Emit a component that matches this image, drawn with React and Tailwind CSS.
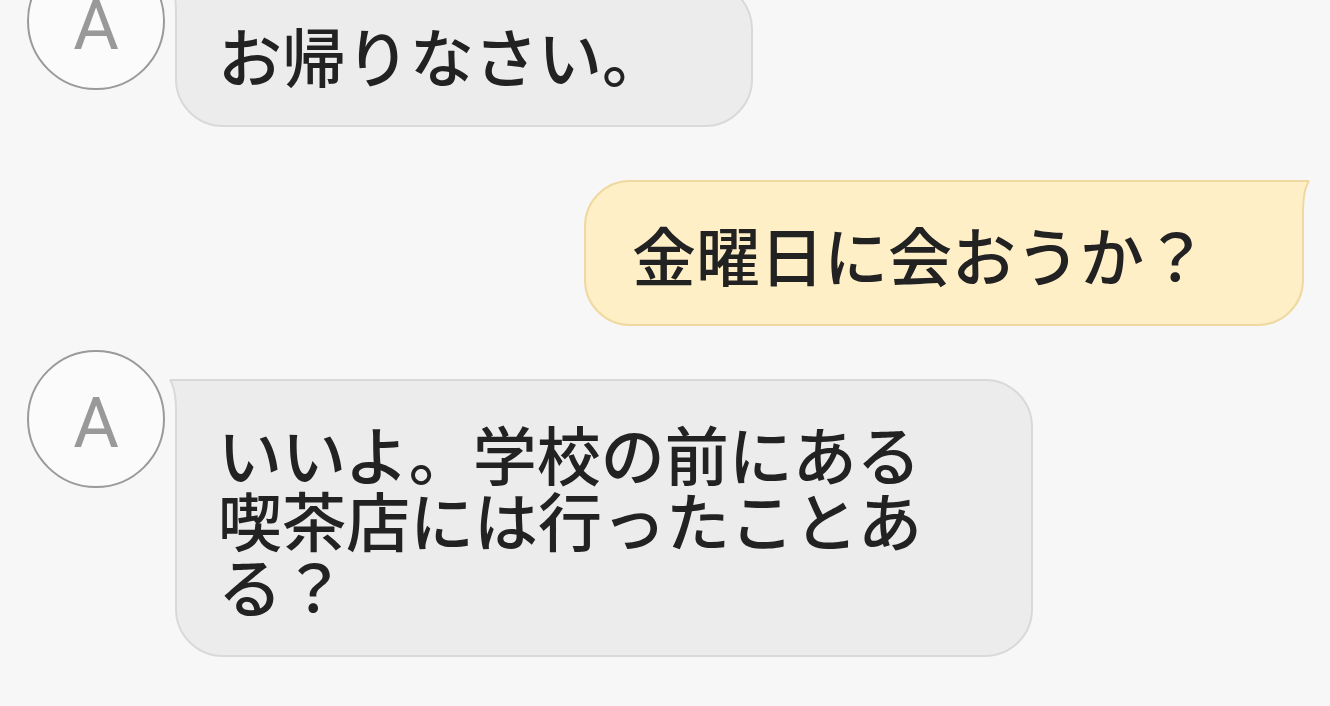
const Avatar = () => (
  <div className="w-[138px] h-[138px] shrink-0 -mt-[29px] rounded-full border-2 border-[#9a9a9a] bg-[#fbfbfb] flex items-center justify-center pt-[8px]">
    <span className="text-[70px] leading-none text-[#999]" style={{ fontFamily: "Roboto, 'Liberation Sans', sans-serif" }}>
      A
    </span>
  </div>
);

const LeftTail = () => (
  <svg className="absolute -left-[8px] -top-[2px]" width="16" height="32" viewBox="0 0 16 32">
    <path d="M1 1 L16 1 L16 32 L7 32 Q7 10 1 1 Z" fill="#ececec" />
    <path d="M1 1 L16 1 M1 1 Q7 10 7 32" fill="none" stroke="#d9d9d9" strokeWidth="2" />
  </svg>
);

const RightTail = () => (
  <svg className="absolute -right-[8px] -top-[2px]" width="16" height="32" viewBox="0 0 16 32">
    <path d="M15 1 L0 1 L0 32 L9 32 Q9 10 15 1 Z" fill="#ffefc7" />
    <path d="M15 1 L0 1 M15 1 Q9 10 9 32" fill="none" stroke="#efd9a0" strokeWidth="2" />
  </svg>
);

const LeftMessage = ({ width, children }) => (
  <div className="flex items-start gap-[10px] pl-[27px]">
    <Avatar />
    <div
      className="relative rounded-[48px] rounded-tl-none border-2 border-[#d9d9d9] bg-[#ececec] pl-[41px] pr-[20px] py-[38px] text-[64px] leading-[66px] font-medium text-[#222]"
      style={{ width }}
    >
      <LeftTail />
      {children}
    </div>
  </div>
);

const RightMessage = ({ width, children }) => (
  <div className="flex justify-end pr-[26px]">
    <div
      className="relative rounded-[46px] rounded-tr-none border-2 border-[#efd9a0] bg-[#ffefc7] pl-[46px] pr-[20px] py-[38px] text-[64px] leading-[66px] font-medium text-[#222]"
      style={{ width }}
    >
      <RightTail />
      {children}
    </div>
  </div>
);

export default function App() {
  return (
    <div
      className="w-[1330px] h-[706px] overflow-hidden bg-[#f7f7f7]"
      style={{ fontFamily: "'Noto Sans CJK JP', 'Noto Sans', sans-serif" }}
    >
      <div className="flex flex-col gap-[53px] -mt-[19px]">
        <LeftMessage width={578}>お帰りなさい。</LeftMessage>
        <RightMessage width={720}>金曜日に会おうか？</RightMessage>
        <LeftMessage width={858}>
          いいよ。学校の前にある
          <br />
          喫茶店には行ったことあ
          <br />
          る？
        </LeftMessage>
      </div>
    </div>
  );
}
